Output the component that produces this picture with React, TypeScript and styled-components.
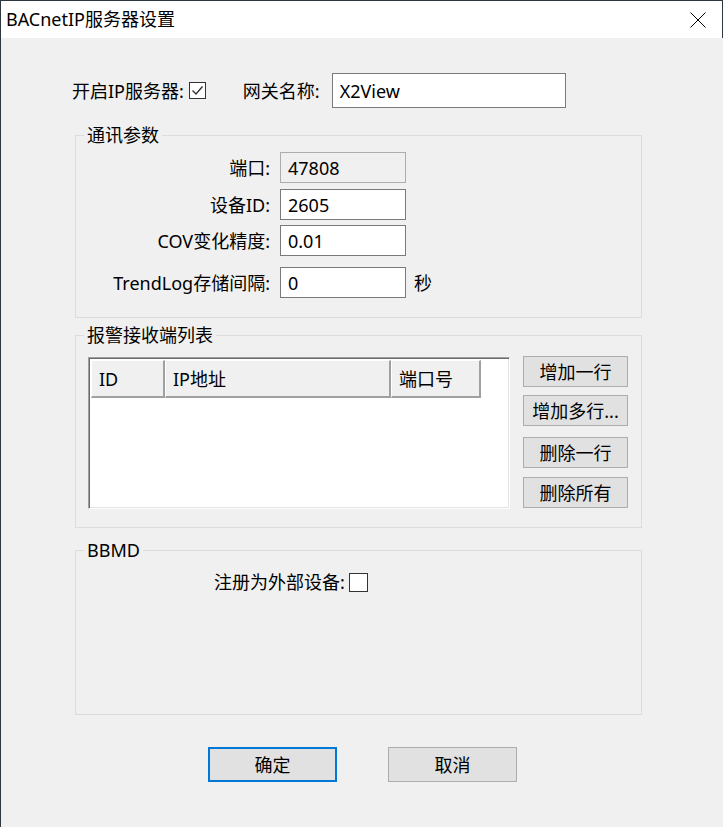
import React from "react";
import styled, { createGlobalStyle } from "styled-components";

const Global = createGlobalStyle`
  html, body { margin: 0; padding: 0; background: #f0f0f0; }
  body { font-family: "Noto Sans", "Noto Sans CJK SC", sans-serif; font-size: 18px; color: #000; }
  * { box-sizing: border-box; }
`;

const Window = styled.div`
  width: 723px;
  height: 827px;
  display: flex;
  flex-direction: column;
  border-left: 1px solid #2e3640;
  background: #f0f0f0;
  overflow: hidden;
`;

const TitleBar = styled.div`
  height: 38px;
  flex: none;
  background: #fff;
  border-top: 1px solid #2e3640;
  border-right: 1px solid #2e3640;
  display: flex;
  align-items: center;
  justify-content: space-between;
  padding: 0 16px 0 5px;
  font-size: 18px;
  line-height: 1;
`;

const TitleText = styled.span`
  padding-bottom: 1px;
`;

const Body = styled.div`
  flex: 1;
  padding: 35px 0 0 70px;
  display: flex;
  flex-direction: column;
`;

const TopRow = styled.div`
  display: flex;
  align-items: center;
  height: 35px;
  padding-left: 1px;
`;

const Label = styled.span<{ $gapLeft?: number; $gapRight?: number }>`
  white-space: nowrap;
  line-height: 20px;
  margin-left: ${(p) => p.$gapLeft ?? 0}px;
  margin-right: ${(p) => p.$gapRight ?? 0}px;
`;

const Check = styled.span<{ $size: number; $gapLeft?: number }>`
  width: ${(p) => p.$size}px;
  height: ${(p) => p.$size}px;
  border: 1px solid #333;
  background: #fff;
  display: inline-flex;
  align-items: center;
  justify-content: center;
  margin-left: ${(p) => p.$gapLeft ?? 0}px;
  flex: none;
`;

const TextBox = styled.div<{ $w: number; $h: number; $disabled?: boolean }>`
  width: ${(p) => p.$w}px;
  height: ${(p) => p.$h}px;
  border: 1px solid ${(p) => (p.$disabled ? "#adadad" : "#7a7a7a")};
  background: ${(p) => (p.$disabled ? "#f0f0f0" : "#fff")};
  display: flex;
  align-items: center;
  padding-left: 7px;
  flex: none;
  line-height: 20px;
`;

const Group = styled.fieldset<{ $mt: number }>`
  margin: ${(p) => p.$mt}px 0 0 4px;
  width: 567px;
  padding: 0;
  border: 1px solid #dcdcdc;
  min-width: 0;
`;

const Legend = styled.legend`
  margin-left: 8px;
  padding: 0 3px;
  line-height: 20px;
  height: 20px;
`;

const FormBody = styled.div`
  padding: 7px 0 19px 0;
  display: flex;
  flex-direction: column;
`;

const FormRow = styled.div<{ $mt: number }>`
  display: flex;
  align-items: center;
  margin-top: ${(p) => p.$mt}px;
`;

const FormLabel = styled.span`
  width: 194px;
  text-align: right;
  margin-right: 10px;
  white-space: nowrap;
  line-height: 20px;
`;

const Unit = styled.span`
  margin-left: 8px;
  line-height: 20px;
`;

const ListBody = styled.div`
  padding: 12px 0 18px 12px;
  display: flex;
  align-items: flex-start;
`;

const ListBox = styled.div`
  width: 422px;
  height: 152px;
  background: #fff;
  border-style: solid;
  border-width: 1px;
  border-color: #a0a0a0 #ffffff #ffffff #a0a0a0;
  box-shadow: inset 1px 1px 0 #696969, inset -1px -1px 0 #e3e3e3;
  padding: 2px 0 0 2px;
`;

const Header = styled.div`
  display: flex;
  height: 38px;
`;

const HeaderCell = styled.div<{ $w: number }>`
  width: ${(p) => p.$w}px;
  background: #f0f0f0;
  border-style: solid;
  border-width: 1px 2px 2px 1px;
  border-color: #ffffff #a0a0a0 #a0a0a0 #ffffff;
  display: flex;
  align-items: center;
  padding-left: 7px;
  line-height: 20px;
`;

const SideButtons = styled.div`
  margin-left: 13px;
  margin-top: -1px;
  display: flex;
  flex-direction: column;
`;

const Button = styled.button<{ $w: number; $h: number; $mt?: number; $primary?: boolean }>`
  width: ${(p) => p.$w}px;
  height: ${(p) => p.$h}px;
  margin-top: ${(p) => p.$mt ?? 0}px;
  background: #e1e1e1;
  border: ${(p) => (p.$primary ? "2px solid #0078d7" : "1px solid #adadad")};
  font-family: "Noto Sans", "Noto Sans CJK SC", sans-serif;
  font-size: 18px;
  color: #000;
  padding: 0;
  line-height: 20px;
  display: flex;
  align-items: center;
  justify-content: center;
  white-space: nowrap;
`;

const BbmdBody = styled.div`
  height: 154px;
  padding: 12px 0 0 138px;
`;

const CheckRow = styled.div`
  display: flex;
  align-items: center;
  height: 20px;
`;

const BottomRow = styled.div`
  display: flex;
  margin-top: 32px;
  padding-left: 137px;
  gap: 51px;
`;

const CloseIcon = () => (
  <svg width="16" height="16" viewBox="0 0 16 16">
    <path d="M0.5 0.5 L15.5 15.5 M15.5 0.5 L0.5 15.5" stroke="#000" strokeWidth="1" fill="none" />
  </svg>
);

const CheckMark = () => (
  <svg width="13" height="13" viewBox="0 0 13 13">
    <path d="M1.5 6.5 L5 10 L11.5 2.5" stroke="#333" strokeWidth="1.4" fill="none" />
  </svg>
);

export default function App() {
  return (
    <>
      <Global />
      <Window>
        <TitleBar>
          <TitleText>BACnetIP服务器设置</TitleText>
          <CloseIcon />
        </TitleBar>
        <Body>
          <TopRow>
            <Label>开启IP服务器:</Label>
            <Check $size={17} $gapLeft={5}>
              <CheckMark />
            </Check>
            <Label $gapLeft={37} $gapRight={12}>网关名称:</Label>
            <TextBox $w={234} $h={35}>X2View</TextBox>
          </TopRow>

          <Group $mt={17}>
            <Legend>通讯参数</Legend>
            <FormBody>
              <FormRow $mt={0}>
                <FormLabel>端口:</FormLabel>
                <TextBox $w={126} $h={31} $disabled>47808</TextBox>
              </FormRow>
              <FormRow $mt={6}>
                <FormLabel>设备ID:</FormLabel>
                <TextBox $w={126} $h={31}>2605</TextBox>
              </FormRow>
              <FormRow $mt={5}>
                <FormLabel>COV变化精度:</FormLabel>
                <TextBox $w={126} $h={31}>0.01</TextBox>
              </FormRow>
              <FormRow $mt={11}>
                <FormLabel>TrendLog存储间隔:</FormLabel>
                <TextBox $w={126} $h={31}>0</TextBox>
                <Unit>秒</Unit>
              </FormRow>
            </FormBody>
          </Group>

          <Group $mt={7}>
            <Legend>报警接收端列表</Legend>
            <ListBody>
              <ListBox>
                <Header>
                  <HeaderCell $w={74}>ID</HeaderCell>
                  <HeaderCell $w={226}>IP地址</HeaderCell>
                  <HeaderCell $w={90}>端口号</HeaderCell>
                </Header>
              </ListBox>
              <SideButtons>
                <Button $w={105} $h={31}>增加一行</Button>
                <Button $w={105} $h={31} $mt={8}>增加多行...</Button>
                <Button $w={105} $h={31} $mt={11}>删除一行</Button>
                <Button $w={105} $h={31} $mt={9}>删除所有</Button>
              </SideButtons>
            </ListBody>
          </Group>

          <Group $mt={12}>
            <Legend>BBMD</Legend>
            <BbmdBody>
              <CheckRow>
                <Label>注册为外部设备:</Label>
                <Check $size={19} $gapLeft={4} />
              </CheckRow>
            </BbmdBody>
          </Group>

          <BottomRow>
            <Button $w={129} $h={35} $primary>确定</Button>
            <Button $w={129} $h={35}>取消</Button>
          </BottomRow>
        </Body>
      </Window>
    </>
  );
}
